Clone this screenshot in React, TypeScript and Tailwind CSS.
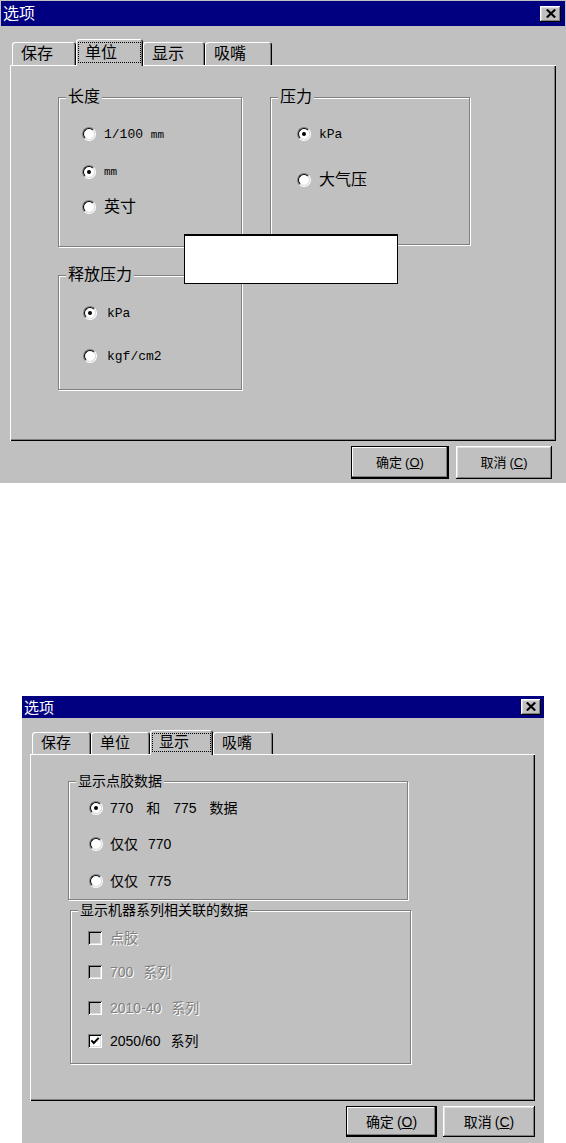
import React from 'react';

const raised =
  'shadow-[inset_-1px_-1px_0_#000,inset_1px_1px_0_#fff,inset_-2px_-2px_0_#808080,inset_2px_2px_0_#dfdfdf]';
const defaultRaised =
  'shadow-[inset_0_0_0_1px_#000,inset_-2px_-2px_0_#000,inset_-3px_-3px_0_#808080,inset_2px_2px_0_#fff]';
const mono = "font-['Liberation_Mono','Noto_Sans_CJK_SC',monospace]";

const CloseButton: React.FC<{ className: string }> = ({ className }) => (
    <div className={`flex items-center justify-center bg-[#c0c0c0] ${raised} ${className}`}>
        <svg width="10" height="9" viewBox="0 0 10 9" className="mb-px">
            <path d="M0.8 0.5 L9.2 8.5 M9.2 0.5 L0.8 8.5" stroke="#000" strokeWidth="2.1" />
        </svg>
    </div>
);

const Tab: React.FC<{ label: string; active?: boolean; className: string }> = ({ label, active, className }) => (
    <div
        className={`relative flex items-center rounded-t-[3px] bg-[#c0c0c0] pl-[9px] shadow-[inset_1px_1px_0_#fff,inset_-1px_0_0_#000,inset_-2px_0_0_#808080] ${
            active ? 'z-10 -mb-px' : ''
        } ${className}`}
    >
        {label}
        {active && <span className="absolute inset-x-[2px] top-[3px] bottom-[3px] border border-dotted border-black" />}
    </div>
);

const Group: React.FC<{ label: string; className: string; children: React.ReactNode }> = ({ label, className, children }) => (
    <div className={`relative flex flex-col border border-[#808080] shadow-[inset_1px_1px_0_#fff,1px_1px_0_#fff] ${className}`}>
        <span className="absolute left-[7px] top-[-1px] -translate-y-1/2 bg-[#c0c0c0] px-[2px] leading-none">{label}</span>
        {children}
    </div>
);

const Radio: React.FC<{ checked?: boolean }> = ({ checked }) => (
    <span className="relative inline-block h-[14px] w-[14px] shrink-0 rounded-full border border-t-[#808080] border-l-[#808080] border-r-white border-b-white">
        <span className="absolute inset-0 rounded-full border border-t-black border-l-black border-r-[#dfdfdf] border-b-[#dfdfdf] bg-white" />
        {checked && <span className="absolute left-[4px] top-[4px] h-[4px] w-[4px] rounded-full bg-black" />}
    </span>
);

const Check: React.FC<{ checked?: boolean; disabled?: boolean }> = ({ checked, disabled }) => (
    <span
        className={`relative inline-block h-[14px] w-[14px] shrink-0 shadow-[inset_1px_1px_0_#808080,inset_-1px_-1px_0_#fff,inset_2px_2px_0_#000,inset_-2px_-2px_0_#dfdfdf] ${
            disabled ? 'bg-[#c0c0c0]' : 'bg-white'
        }`}
    >
        {checked && (
            <svg width="14" height="14" viewBox="0 0 14 14" className="absolute inset-0">
                <path d="M3.3 6.4 L5.8 9 L10.7 3.9" stroke="#000" strokeWidth="2" fill="none" />
            </svg>
        )}
    </span>
);

const Row: React.FC<{ className: string; children: React.ReactNode }> = ({ className, children }) => (
    <div className={`flex h-[20px] items-center leading-none ${className}`}>{children}</div>
);

const Button: React.FC<{ label: string; hotkey: string; isDefault?: boolean; className: string }> = ({
    label,
    hotkey,
    isDefault,
    className,
}) => (
    <button className={`flex items-center justify-center bg-[#c0c0c0] leading-none text-black ${isDefault ? defaultRaised : raised} ${className}`}>
        {label}
        <span className="ml-[3px]">
            (<u>{hotkey}</u>)
        </span>
    </button>
);

const disabledText = 'text-[#808080] [text-shadow:1px_1px_0_#fff] [word-spacing:6px]';

export default function App() {
    return (
        <div className="min-h-[1143px] w-[566px] bg-white font-['Liberation_Sans','Noto_Sans_CJK_SC',sans-serif] text-black">
            {/* 单位 tab */}
            <div className="h-[483px] w-[566px] bg-[#c0c0c0] px-px pt-px text-[16px]">
                <div className="flex h-[25px] items-center justify-between bg-[#000080] pl-[2px] pr-[4px]">
                    <span className="leading-none text-white">选项</span>
                    <CloseButton className="h-[16px] w-[21px]" />
                </div>
                <div className="ml-[9px] mt-[13px] w-[546px]">
                    <div className="flex h-[26px] items-end pl-[2px]">
                        <Tab label="保存" className="h-[23px] w-[64px]" />
                        <Tab label="单位" active className="h-[27px] w-[67px]" />
                        <Tab label="显示" className="h-[23px] w-[62px]" />
                        <Tab label="吸嘴" className="h-[23px] w-[67px]" />
                    </div>
                    <div className="relative flex h-[376px] pl-[48px] pt-[32px] shadow-[inset_1px_1px_0_#fff,inset_-1px_-1px_0_#000,inset_-2px_-2px_0_#808080]">
                        <div className="flex w-[184px] flex-col">
                            <Group label="长度" className="h-[150px] pt-[26px]">
                                <Row className="gap-[8px] pl-[23px]">
                                    <Radio />
                                    <span className={`${mono} text-[13px]`}>
                                        1/100 <span className="text-[11px]">mm</span>
                                    </span>
                                </Row>
                                <Row className="mt-[18px] gap-[8px] pl-[23px]">
                                    <Radio checked />
                                    <span className={`${mono} text-[11px]`}>mm</span>
                                </Row>
                                <Row className="mt-[15px] gap-[8px] pl-[23px]">
                                    <Radio />
                                    <span>英寸</span>
                                </Row>
                            </Group>
                            <Group label="释放压力" className="mt-[28px] h-[115px] pt-[27px]">
                                <Row className="gap-[10px] pl-[24px]">
                                    <Radio checked />
                                    <span className={`${mono} text-[13px]`}>kPa</span>
                                </Row>
                                <Row className="mt-[23px] gap-[10px] pl-[24px]">
                                    <Radio />
                                    <span className={`${mono} text-[13px]`}>kgf/cm2</span>
                                </Row>
                            </Group>
                        </div>
                        <Group label="压力" className="ml-[28px] h-[148px] w-[200px] pt-[26px]">
                            <Row className="gap-[8px] pl-[26px]">
                                <Radio checked />
                                <span className={`${mono} text-[13px]`}>kPa</span>
                            </Row>
                            <Row className="mt-[26px] gap-[8px] pl-[26px]">
                                <Radio />
                                <span>大气压</span>
                            </Row>
                        </Group>
                        <div className="absolute left-[174px] top-[169px] h-[50px] w-[214px] border border-t-2 border-black bg-white" />
                    </div>
                    <div className="mt-[5px] flex justify-end gap-[7px] pr-[4px] text-[13px]">
                        <Button label="确定" hotkey="O" isDefault className="h-[33px] w-[98px]" />
                        <Button label="取消" hotkey="C" className="h-[33px] w-[96px]" />
                    </div>
                </div>
            </div>

            {/* 显示 tab */}
            <div className="ml-[22px] mt-[213px] h-[447px] w-[522px] bg-[#c0c0c0] text-[15px]">
                <div className="flex h-[22px] items-center justify-between bg-[#000080] pl-[2px] pr-[3px]">
                    <span className="leading-none text-white">选项</span>
                    <CloseButton className="h-[16px] w-[20px]" />
                </div>
                <div className="ml-[8px] mt-[12px] w-[505px]">
                    <div className="flex h-[24px] items-end pl-[2px]">
                        <Tab label="保存" className="h-[22px] w-[59px]" />
                        <Tab label="单位" className="h-[22px] w-[59px]" />
                        <Tab label="显示" active className="h-[25px] w-[63px]" />
                        <Tab label="吸嘴" className="h-[22px] w-[60px]" />
                    </div>
                    <div className="flex h-[347px] flex-col pl-[38px] pt-[27px] shadow-[inset_1px_1px_0_#fff,inset_-1px_-1px_0_#000,inset_-2px_-2px_0_#808080]">
                        <Group label="显示点胶数据" className="h-[119px] w-[340px] pt-[16px] text-[14px]">
                            <Row className="gap-[7px] pl-[20px]">
                                <Radio checked />
                                <span className="[word-spacing:9px]">770 和 775 数据</span>
                            </Row>
                            <Row className="mt-[16px] gap-[7px] pl-[20px]">
                                <Radio />
                                <span className="[word-spacing:6px]">仅仅 770</span>
                            </Row>
                            <Row className="mt-[17px] gap-[7px] pl-[20px]">
                                <Radio />
                                <span className="[word-spacing:6px]">仅仅 775</span>
                            </Row>
                        </Group>
                        <Group label="显示机器系列相关联的数据" className="ml-[2px] mt-[10px] h-[154px] w-[341px] pt-[17px] text-[14px]">
                            <Row className="gap-[8px] pl-[17px]">
                                <Check disabled />
                                <span className={disabledText}>点胶</span>
                            </Row>
                            <Row className="mt-[14px] gap-[8px] pl-[17px]">
                                <Check disabled />
                                <span className={disabledText}>700 系列</span>
                            </Row>
                            <Row className="mt-[16px] gap-[8px] pl-[17px]">
                                <Check disabled />
                                <span className={disabledText}>2010-40 系列</span>
                            </Row>
                            <Row className="mt-[13px] gap-[8px] pl-[17px]">
                                <Check checked />
                                <span className="[word-spacing:6px]">2050/60 系列</span>
                            </Row>
                        </Group>
                    </div>
                    <div className="mt-[5px] flex justify-end gap-[6px] text-[14px]">
                        <Button label="确定" hotkey="O" isDefault className="h-[31px] w-[91px]" />
                        <Button label="取消" hotkey="C" className="h-[31px] w-[92px]" />
                    </div>
                </div>
            </div>
        </div>
    );
}
